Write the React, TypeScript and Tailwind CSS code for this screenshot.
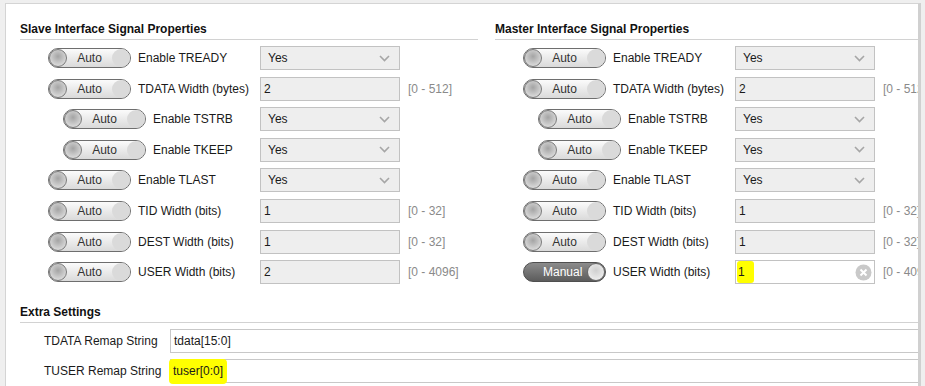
import React from 'react';

type Prop = {
  label: string;
  kind: 'select' | 'input';
  value: string;
  range?: string;
  indent?: boolean;
  manual?: boolean;
};

const slaveProps: Prop[] = [
  { label: 'Enable TREADY', kind: 'select', value: 'Yes' },
  { label: 'TDATA Width (bytes)', kind: 'input', value: '2', range: '[0 - 512]' },
  { label: 'Enable TSTRB', kind: 'select', value: 'Yes', indent: true },
  { label: 'Enable TKEEP', kind: 'select', value: 'Yes', indent: true },
  { label: 'Enable TLAST', kind: 'select', value: 'Yes' },
  { label: 'TID Width (bits)', kind: 'input', value: '1', range: '[0 - 32]' },
  { label: 'DEST Width (bits)', kind: 'input', value: '1', range: '[0 - 32]' },
  { label: 'USER Width (bits)', kind: 'input', value: '2', range: '[0 - 4096]' },
];

const masterProps: Prop[] = [
  ...slaveProps.slice(0, 7),
  { label: 'USER Width (bits)', kind: 'input', value: '1', range: '[0 - 4096]', manual: true },
];

const Toggle = ({ manual }: { manual?: boolean }) => {
  if (manual) {
    return (
      <div className="flex h-[20px] w-[83px] shrink-0 items-center justify-between rounded-full border border-[#4f4f4f] bg-gradient-to-b from-[#8c8c8c] to-[#5c5c5c] pl-[19px]">
        <span className="text-[12px] leading-none text-white">Manual</span>
        <span className="h-[18px] w-[18px] rounded-full border border-[#6a6a6a] bg-[radial-gradient(circle_at_50%_40%,#cfcfcf,#f6f6f6)]" />
      </div>
    );
  }
  return (
    <div className="flex h-[20px] w-[83px] shrink-0 items-center justify-between rounded-full border border-[#6e6e6e] bg-gradient-to-b from-[#fbfbfb] to-[#dadada]">
      <span className="h-[18px] w-[18px] rounded-full border border-[#7a7a7a] bg-[radial-gradient(circle_at_50%_40%,#a4a4a4,#ececec)]" />
      <span className="text-[12px] leading-none text-[#333]">Auto</span>
      <span className="h-[18px] w-[18px] rounded-full bg-[#dadada]" />
    </div>
  );
};

const Chevron = () => (
  <svg width="11" height="7" viewBox="0 0 11 7" className="mr-[9px]">
    <polyline points="1,1 5.5,5.5 10,1" fill="none" stroke="#a6a6a6" strokeWidth="1.6" />
  </svg>
);

const ClearIcon = () => (
  <svg width="17" height="17" viewBox="0 0 17 17" className="mr-[2px]">
    <circle cx="8.5" cy="8.5" r="8" fill="#c9c9c9" />
    <path d="M5.5 5.5 L11.5 11.5 M11.5 5.5 L5.5 11.5" stroke="#fff" strokeWidth="2" />
  </svg>
);

const PropRow = ({ p }: { p: Prop }) => (
  <div className="flex h-[24px] items-center whitespace-nowrap">
    <div className={`flex w-[240px] shrink-0 items-center gap-[7px] ${p.indent ? 'pl-[43px]' : 'pl-[28px]'}`}>
      <Toggle manual={p.manual} />
      <span>{p.label}</span>
    </div>
    {p.kind === 'select' ? (
      <div className="flex h-[24px] w-[140px] shrink-0 items-center justify-between border border-[#c2c2c2] bg-[#eeeeee] pl-[7px]">
        <span>{p.value}</span>
        <Chevron />
      </div>
    ) : p.manual ? (
      <div className="flex h-[24px] w-[140px] shrink-0 items-center justify-between border border-[#c2c2c2] bg-white pl-[1px]">
        <span className="flex h-[22px] items-center rounded-[3px] bg-[#ffff00] pl-[1px] pr-[9px]">{p.value}</span>
        <ClearIcon />
      </div>
    ) : (
      <div className="flex h-[24px] w-[140px] shrink-0 items-center border border-[#c2c2c2] bg-[#eeeeee] pl-[3px]">
        <span>{p.value}</span>
      </div>
    )}
    {p.range && <span className="ml-[8px] text-[#8a8a8a]">{p.range}</span>}
  </div>
);

const Header = ({ title, className = '' }: { title: string; className?: string }) => (
  <div className={`border-b border-[#d2d2d2] pb-[2px] text-[12px] font-bold leading-[16px] text-[#111] ${className}`}>
    {title}
  </div>
);

const Panel = ({ title, rows }: { title: string; rows: Prop[] }) => (
  <div className="min-w-0 overflow-hidden">
    <Header title={title} />
    <div className="mt-[6px] flex flex-col gap-[6.6px]">
      {rows.map((p, i) => (
        <PropRow key={i} p={p} />
      ))}
    </div>
  </div>
);

const App = () => {
  return (
    <div
      className="h-[386px] w-[925px] overflow-hidden bg-[#efefef] pl-[5px] pt-[3px] text-[12px] text-[#1a1a1a]"
      style={{ fontFamily: '"Liberation Sans", Arial, sans-serif' }}
    >
      <div className="h-[400px] w-[916px] overflow-hidden border-l border-t border-r-[3px] border-l-[#d4d4d4] border-t-[#d4d4d4] border-r-[#d0d0d0] bg-white pl-[14px] pt-[17px]">
        <div className="grid grid-cols-[458px_1fr] gap-x-[17px]">
          <Panel title="Slave Interface Signal Properties" rows={slaveProps} />
          <Panel title="Master Interface Signal Properties" rows={masterProps} />
        </div>

        <Header title="Extra Settings" className="mt-[20px]" />
        <div className="mt-[6px] flex flex-col gap-[6px] whitespace-nowrap">
          <div className="flex h-[24px] items-center">
            <span className="w-[150px] shrink-0 pl-[24px]">TDATA Remap String</span>
            <div className="flex h-[24px] w-[800px] shrink-0 items-center border border-[#c8c8c8] bg-white pl-[3px]">
              tdata[15:0]
            </div>
          </div>
          <div className="flex h-[24px] items-center">
            <span className="w-[150px] shrink-0 pl-[24px]">TUSER Remap String</span>
            <div className="flex h-[24px] w-[800px] shrink-0 items-center border border-[#c8c8c8] bg-white">
              <span className="-ml-[2px] flex h-[25px] items-center rounded-[4px] bg-[#ffff00] pl-[4px] pr-[4px]">tuser[0:0]</span>
            </div>
          </div>
        </div>
      </div>
    </div>
  );
};

export default App;
